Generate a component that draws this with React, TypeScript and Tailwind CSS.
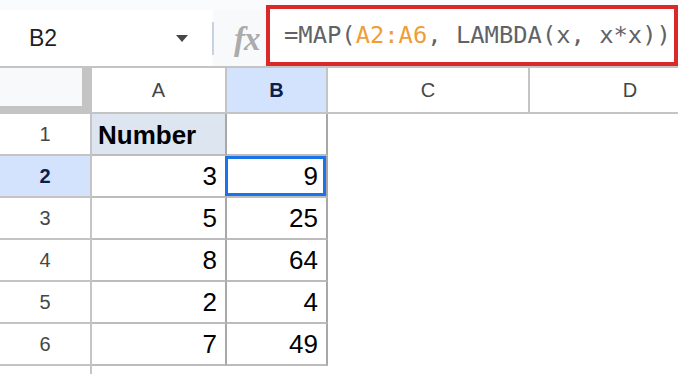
const rows = [
  { n: 1, a: "Number", b: "" },
  { n: 2, a: "3", b: "9" },
  { n: 3, a: "5", b: "25" },
  { n: 4, a: "8", b: "64" },
  { n: 5, a: "2", b: "4" },
  { n: 6, a: "7", b: "49" },
];

const App = () => {
  return (
    <div className="w-[678px] h-[374px] overflow-hidden bg-white font-['Liberation_Sans',Arial,sans-serif]">
      {/* Toolbar: name box + formula bar */}
      <div className="flex items-end h-[66px] bg-[#f9fbfd]">
        <div className="w-[212px] h-[56px] bg-white flex items-center justify-between pl-[29px] pr-[24px]">
          <span className="text-[23px] text-[#1f1f1f]">B2</span>
          <svg width="12" height="7" viewBox="0 0 12 7">
            <polygon points="0,0 12,0 6,7" fill="#444746" />
          </svg>
        </div>
        <div className="w-[2px] h-[33px] mb-[11px] bg-[#c7d3e0]" />
        <div className="w-[52px] h-[56px] bg-[#f8f9fa] flex items-center pl-[20px] pt-[2px]">
          <span className="font-['Liberation_Serif',serif] italic font-bold text-[33px] text-[#ababab] leading-none tracking-[-1px]">
            fx
          </span>
        </div>
        <div className="w-[412px] h-[61px] border-[4px] border-[#d9292b] bg-white flex items-center pl-[14px]">
          <span className="font-['DejaVu_Sans_Mono',monospace] text-[23.8px] text-[#5f6368] whitespace-nowrap">
            =MAP(<span className="text-[#f09d38]">A2:A6</span>, LAMBDA(x, x*x))
          </span>
        </div>
      </div>

      {/* Column headers */}
      <div className="flex h-[48px] text-[20px] text-[#444746]">
        <div className="w-[92px] shrink-0 bg-[#f8f9fa] border-t-2 border-r-[10px] border-b-[8px] border-[#c4c4c4]" />
        <div className="w-[135px] shrink-0 flex items-center justify-center border-t-2 border-r-2 border-b-2 border-[#c4c4c4]">
          A
        </div>
        <div className="w-[101px] shrink-0 flex items-center justify-center bg-[#d3e3fd] font-bold text-[#0b1f4f] border-t-2 border-r-2 border-b-2 border-[#c4c4c4]">
          B
        </div>
        <div className="w-[202px] shrink-0 flex items-center justify-center border-t-2 border-r-2 border-b-2 border-[#c4c4c4]">
          C
        </div>
        <div className="w-[200px] shrink-0 flex items-center justify-center border-t-2 border-b-2 border-[#c4c4c4]">
          D
        </div>
      </div>

      {/* Data rows */}
      {rows.map((r) => (
        <div key={r.n} className="flex h-[42px]">
          <div
            className={
              r.n === 2
                ? "w-[92px] shrink-0 flex items-center justify-center text-[20px] bg-[#d3e3fd] font-bold text-[#0b1f4f] border-r-2 border-b-2 border-[#c4c4c4]"
                : "w-[92px] shrink-0 flex items-center justify-center text-[20px] text-[#444746] border-r-2 border-b-2 border-[#c4c4c4]"
            }
          >
            {r.n}
          </div>
          {r.n === 1 ? (
            <div className="w-[135px] shrink-0 flex items-center pl-[6px] pt-[3px] bg-[#dce5f0] text-[26px] font-bold text-black border-r-2 border-r-[#a8a8a8] border-b-2 border-b-[#bcbcbc]">
              {r.a}
            </div>
          ) : (
            <div className="w-[135px] shrink-0 flex items-center justify-end pr-[8px] text-[26px] text-black border-r-2 border-r-[#a8a8a8] border-b-2 border-b-[#bcbcbc]">
              {r.a}
            </div>
          )}
          <div className="relative w-[101px] shrink-0 flex items-center justify-end pr-[8px] text-[26px] text-black border-r-2 border-r-[#a8a8a8] border-b-2 border-b-[#bcbcbc]">
            {r.b}
            {r.n === 2 && (
              <div className="absolute -left-[2px] right-0 top-0 bottom-0 border-[3px] border-[#1a73e8]" />
            )}
          </div>
          <div className="flex-1" />
        </div>
      ))}

      {/* Partial row 7 */}
      <div className="flex h-[20px]">
        <div className="w-[92px] shrink-0 border-r-2 border-[#c4c4c4]" />
        <div className="flex-1" />
      </div>
    </div>
  );
};

export default App;
